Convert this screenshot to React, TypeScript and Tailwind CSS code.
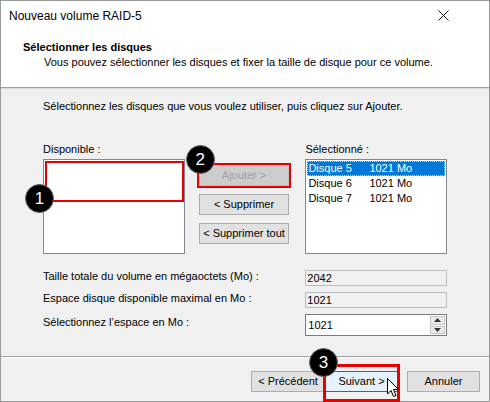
import React from 'react';

const font = { fontFamily: '"Liberation Sans", Arial, sans-serif' };

function Badge({ n }: { n: string }) {
    return (
        <div className="flex h-[29px] w-[29px] items-center justify-center rounded-full border border-[#6b6b6b] bg-black text-[17px] leading-none text-white">
            {n}
        </div>
    );
}

function WinButton({
    children,
    disabled,
    focused,
    className = '',
}: {
    children: React.ReactNode;
    disabled?: boolean;
    focused?: boolean;
    className?: string;
}) {
    let look = 'border-[#adadad] bg-[#e1e1e1] text-[#000]';
    if (disabled) look = 'border-[#bfbfbf] bg-[#cccccc] text-[#a0a0a0]';
    if (focused) look = 'border-[#0078d7] bg-[#e5f1fb] text-[#000]';
    return (
        <div className={`flex h-[21px] items-center justify-center border text-[11px] ${look} ${className}`}>
            {children}
        </div>
    );
}

const disks = [
    { name: 'Disque 5', size: '1021 Mo' },
    { name: 'Disque 6', size: '1021 Mo' },
    { name: 'Disque 7', size: '1021 Mo' },
];

export default function App() {
    return (
        <div
            className="flex h-[402px] w-[490px] flex-col border border-[#9a9a9a] bg-[#f0f0f0] text-[11px] text-black"
            style={font}
        >
            {/* Title bar */}
            <div className="flex h-[29px] items-center justify-between bg-white pl-[8px] pr-[40px]">
                <span className="text-[12px]">Nouveau volume RAID-5</span>
                <svg width="11" height="11" viewBox="0 0 11 11">
                    <path d="M0.5 0.5 L10.5 10.5 M10.5 0.5 L0.5 10.5" stroke="#111" strokeWidth="1" />
                </svg>
            </div>

            {/* Header */}
            <div className="h-[57px] bg-white pl-[22px] pt-[10px] leading-[15px]">
                <div className="font-bold">Sélectionner les disques</div>
                <div className="pl-[21px]">
                    Vous pouvez sélectionner les disques et fixer la taille de disque pour ce volume.
                </div>
            </div>
            <div className="h-[2px] border-t border-[#a0a0a0] border-b-white bg-[#dcdcdc]" />

            {/* Body */}
            <div className="flex flex-col px-[42px] pt-[10px] leading-[15px]">
                <div>Sélectionnez les disques que vous voulez utiliser, puis cliquez sur Ajouter.</div>

                <div className="mt-[28px] flex items-start">
                    <div className="flex w-[142px] flex-col">
                        <div>Disponible :</div>
                        <div className="relative mt-[2px] h-[95px] border border-[#828790] bg-white">
                            <div className="absolute left-[1px] top-[1px] h-[41px] w-[139px] border-2 border-[#e60000]" />
                            <div className="absolute left-[-19px] top-[24px]">
                                <Badge n="1" />
                            </div>
                        </div>
                    </div>

                    <div className="ml-[14px] mt-[23px] flex w-[91px] flex-col gap-[8px]">
                        <div className="relative">
                            <WinButton disabled>Ajouter &gt;</WinButton>
                            <div className="absolute inset-[-2px] border-2 border-[#e60000]" />
                            <div className="absolute left-[-13px] top-[-20px]">
                                <Badge n="2" />
                            </div>
                        </div>
                        <WinButton>&lt; Supprimer</WinButton>
                        <WinButton>&lt; Supprimer tout</WinButton>
                    </div>

                    <div className="ml-[16px] flex w-[142px] flex-col">
                        <div>Sélectionné :</div>
                        <div className="mt-[2px] h-[95px] border border-[#828790] bg-white p-[1px]">
                            {disks.map((d, i) => (
                                <div
                                    key={d.name}
                                    className={`flex h-[15px] items-center pl-[1px] ${
                                        i === 0 ? 'bg-[#0078d7] text-white outline outline-1 outline-dotted outline-[#f7c98a] -outline-offset-1' : ''
                                    }`}
                                >
                                    <span className="w-[61px]">{d.name}</span>
                                    <span>{d.size}</span>
                                </div>
                            ))}
                        </div>
                    </div>
                </div>

                {/* Size fields */}
                <div className="mt-[16px] flex flex-col gap-[6px]">
                    <div className="flex items-center">
                        <div className="w-[263px] -mt-[3px]">Taille totale du volume en mégaoctets (Mo) :</div>
                        <div className="flex h-[16px] w-[142px] items-center border border-[#bdbdbd] bg-[#f0f0f0] pl-[1px]">
                            2042
                        </div>
                    </div>
                    <div className="flex items-center">
                        <div className="w-[263px] -mt-[3px]">Espace disque disponible maximal en Mo :</div>
                        <div className="flex h-[16px] w-[142px] items-center border border-[#bdbdbd] bg-[#f0f0f0] pl-[1px]">
                            1021
                        </div>
                    </div>
                    <div className="flex items-center">
                        <div className="w-[263px] -mt-[5px]">Sélectionnez l’espace en Mo :</div>
                        <div className="flex h-[22px] w-[142px] items-center border border-[#7a7a7a] bg-white">
                            <span className="flex-1 pl-[2px]">1021</span>
                            <div className="flex h-full w-[17px] flex-col gap-[1px] p-[1px]">
                                <div className="flex flex-1 items-center justify-center border border-[#c4c4c4] bg-[#eaeaea]">
                                    <svg width="7" height="4" viewBox="0 0 7 4">
                                        <path d="M0 4 L3.5 0 L7 4 Z" fill="#333" />
                                    </svg>
                                </div>
                                <div className="flex flex-1 items-center justify-center border border-[#c4c4c4] bg-[#eaeaea]">
                                    <svg width="7" height="4" viewBox="0 0 7 4">
                                        <path d="M0 0 L3.5 4 L7 0 Z" fill="#333" />
                                    </svg>
                                </div>
                            </div>
                        </div>
                    </div>
                </div>
            </div>

            {/* Footer */}
            <div className="mt-[20px] h-[2px] border-t border-[#a0a0a0] bg-white" />
            <div className="flex flex-1 items-start justify-end pr-[9px] pt-[13px]">
                <WinButton className="w-[74px]">&lt; Précédent</WinButton>
                <div className="relative">
                    <WinButton focused className="w-[73px]">Suivant &gt;</WinButton>
                    <div className="absolute left-[-2px] top-[-7px] h-[38px] w-[77px] border-[3px] border-[#e60000]" />
                    <div className="absolute left-[-16px] top-[-23px]">
                        <Badge n="3" />
                    </div>
                    <svg className="absolute left-[62px] top-[7px]" width="13" height="20" viewBox="0 0 13 20">
                        <path
                            d="M0.5 0.5 L0.5 16 L4 12.5 L6.5 18.5 L9 17.5 L6.5 11.5 L11.5 11.5 Z"
                            fill="white"
                            stroke="black"
                            strokeWidth="1"
                            strokeLinejoin="round"
                        />
                    </svg>
                </div>
                <WinButton className="ml-[9px] w-[73px]">Annuler</WinButton>
            </div>
        </div>
    );
}
